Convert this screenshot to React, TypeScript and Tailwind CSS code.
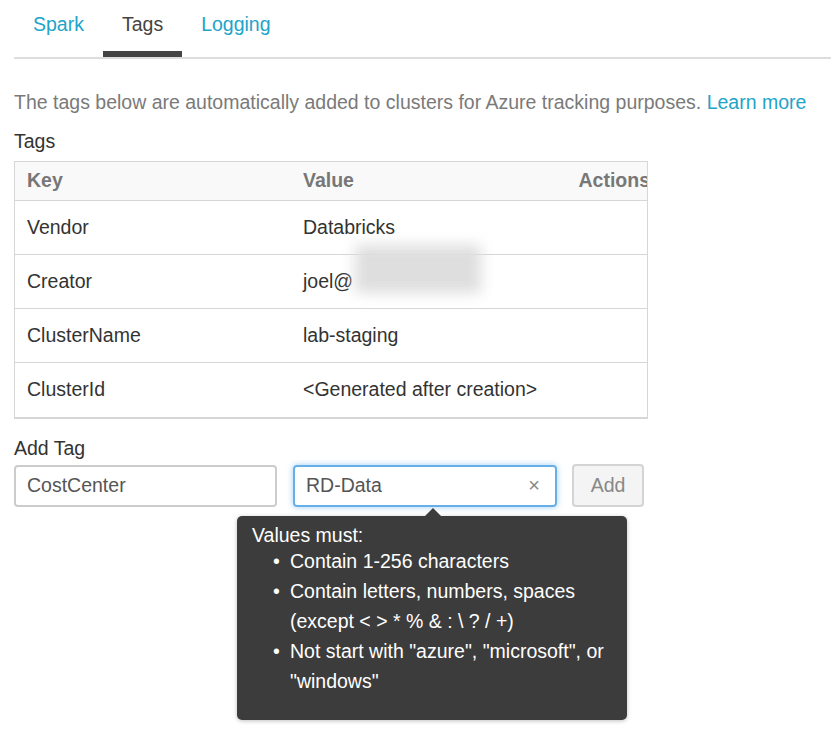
import { useState } from "react";

const tabs = ["Spark", "Tags", "Logging"];

const tags = [
  { key: "Vendor", value: "Databricks" },
  { key: "Creator", value: "joel@", blurred: true },
  { key: "ClusterName", value: "lab-staging" },
  { key: "ClusterId", value: "<Generated after creation>" },
];

const App = () => {
  const [activeTab] = useState("Tags");
  const [tagKey, setTagKey] = useState("CostCenter");
  const [tagValue, setTagValue] = useState("RD-Data");

  return (
    <div
      className="w-[831px] min-h-[737px] bg-white pl-[14px] text-[19.5px] text-[#333]"
      style={{ fontFamily: '"Liberation Sans", Arial, sans-serif' }}
    >
      {/* Tabs */}
      <div className="flex border-b-2 border-[#ddd]">
        {tabs.map((tab) => (
          <div
            key={tab}
            className={`relative h-[57px] px-[19px] pt-[10px] leading-[28px] ${
              tab === activeTab ? "text-[#444]" : "text-[#21a4c9]"
            }`}
          >
            {tab}
            {tab === activeTab && (
              <div className="absolute left-0 right-0 bottom-0 h-[6px] bg-[#444]"></div>
            )}
          </div>
        ))}
      </div>

      <p className="mt-[30px] leading-[26px] text-[#7a7a7a]">
        The tags below are automatically added to clusters for Azure tracking purposes.{" "}
        <span className="text-[#21a4c9]">Learn more</span>
      </p>

      <div className="mt-[13px] leading-[26px] text-[#333]">Tags</div>

      {/* Tags table */}
      <div className="mt-[7px] w-[634px] overflow-hidden border border-[#d6d6d6] border-b-2">
        <div className="w-[647px]">
          <div className="flex h-[39px] items-center bg-[#f9f9f9] border-b border-[#d6d6d6] font-bold text-[#777]">
            <div className="w-[288px] pl-[12px]">Key</div>
            <div className="flex-1">Value</div>
            <div className="pr-[12px]">Actions</div>
          </div>
          {tags.map((t, i) => (
            <div
              key={t.key}
              className={`flex h-[54px] items-center ${
                i < tags.length - 1 ? "border-b border-[#d6d6d6]" : ""
              }`}
            >
              <div className="w-[288px] pl-[12px]">{t.key}</div>
              <div className="relative flex-1">
                {t.value}
                {t.blurred && (
                  <div className="absolute left-[52px] top-[-22px] h-[48px] w-[126px] bg-[#dedede] blur-[7px]"></div>
                )}
              </div>
            </div>
          ))}
        </div>
      </div>

      <div className="mt-[16px] leading-[26px]">Add Tag</div>

      {/* Add tag form */}
      <div className="mt-[3px] flex items-center">
        <input
          value={tagKey}
          onChange={(e) => setTagKey(e.target.value)}
          className="h-[42px] w-[263px] rounded-[4px] border-2 border-[#ccc] px-[11px] text-[19.5px] text-[#555] outline-none"
        />
        <div className="relative ml-[16px]">
          <input
            value={tagValue}
            onChange={(e) => setTagValue(e.target.value)}
            className="h-[42px] w-[264px] rounded-[4px] border-2 border-[#66afe9] px-[11px] pr-[36px] text-[19.5px] text-[#555] outline-none shadow-[0_0_6px_rgba(102,175,233,0.6)]"
          />
          <span className="absolute right-[17px] top-[9px] text-[20px] leading-[22px] text-[#888]">
            ×
          </span>

          {/* Validation tooltip */}
          <div className="absolute left-[-56px] top-[51px] z-10 w-[390px] rounded-[5px] bg-[#3c3c3c] pl-[15px] pr-[14px] pt-[8px] pb-[24px] text-white shadow-[0_1px_4px_rgba(0,0,0,0.25)]">
            <div className="absolute left-[188px] top-[-8px] h-0 w-0 border-x-[8px] border-b-[8px] border-x-transparent border-b-[#3c3c3c]"></div>
            <div className="leading-[22px]">Values must:</div>
            <ul className="ml-[21px] leading-[30px]">
              <li className="flex">
                <span className="w-[17px] shrink-0">•</span>
                <span>Contain 1-256 characters</span>
              </li>
              <li className="flex">
                <span className="w-[17px] shrink-0">•</span>
                <span>Contain letters, numbers, spaces (except &lt; &gt; * % &amp; : \ ? / +)</span>
              </li>
              <li className="flex">
                <span className="w-[17px] shrink-0">•</span>
                <span>Not start with "azure", "microsoft", or "windows"</span>
              </li>
            </ul>
          </div>
        </div>
        <button className="ml-[15px] h-[43px] w-[72px] rounded-[4px] border-2 border-[#d4d4d4] bg-[#f4f4f4] text-[19.5px] text-[#888]">
          Add
        </button>
      </div>
    </div>
  );
};

export default App;
